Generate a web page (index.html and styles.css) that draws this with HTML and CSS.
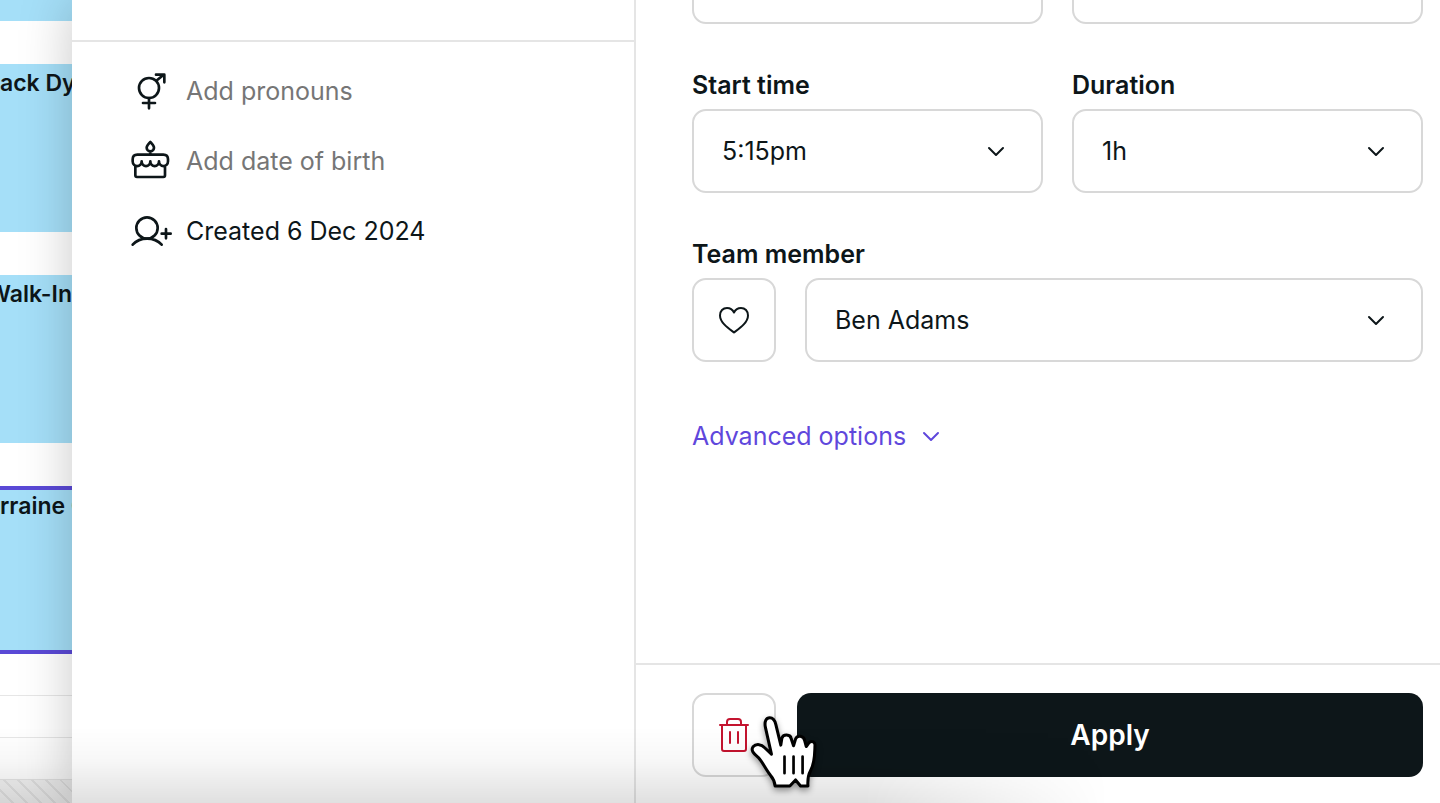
FILE: index.html
```
<!DOCTYPE html>
<html lang="en">
<head>
<meta charset="utf-8">
<title>Edit appointment</title>
<link rel="stylesheet" href="styles.css">
</head>
<body>
<div class="app">
  <aside class="calendar" aria-label="Calendar">
    <div class="event event-first"></div>
    <div class="event">ack Dyn</div>
    <div class="event event-end">Walk-In</div>
    <div class="event event-selected">rraine C</div>
    <div class="slots">
      <div class="slot"></div>
      <div class="slot"></div>
      <div class="slot"></div>
      <div class="slot slot-closed"></div>
    </div>
  </aside>
  <main class="panel">
    <section class="client">
      <div class="client-head"></div>
      <ul class="details">
        <li>
          <svg class="detail-icon" viewBox="36 33 120 120" aria-hidden="true"><circle cx="87" cy="84" r="30"/><path d="M87 114v31M69 129h36M109 62l22-18M108 44h25v23"/></svg>
          <button class="detail-add" type="button">Add pronouns</button>
        </li>
        <li>
          <svg class="detail-icon" viewBox="36 243 120 120" aria-hidden="true"><path d="M91 246c7 7 11 12 11 17s-4 11-11 11-11-6-11-11 4-10 11-17zM91 274v10M52 284h78q14 0 14 14v6c0 19-27 19-27 0 0 19-26 19-26 0 0 19-26 19-26 0 0 19-27 19-27 0v-6q0-14 14-14zM46 318v28q0 5 5 5h79q5 0 5-5v-28"/></svg>
          <button class="detail-add" type="button">Add date of birth</button>
        </li>
        <li>
          <svg class="detail-icon" viewBox="36 453 120 120" aria-hidden="true"><circle cx="81" cy="504" r="32"/><path d="M38 554c11-12 25-18 43-18s33 6 44 18M125 521h27M138 507v28"/></svg>
          <span>Created 6 Dec 2024</span>
        </li>
      </ul>
    </section>
    <form class="editor">
      <div class="fields">
        <div class="row">
          <div class="box"></div>
          <div class="box"></div>
        </div>
        <div class="row">
          <div class="field">
            <label for="start">Start time</label>
            <div class="select">
              <select id="start"><option>5:15pm</option></select>
              <svg class="chevron" viewBox="0 0 18 18" aria-hidden="true"><path d="M2 6l7 7 7-7"/></svg>
            </div>
          </div>
          <div class="field">
            <label for="duration">Duration</label>
            <div class="select">
              <select id="duration"><option>1h</option></select>
              <svg class="chevron" viewBox="0 0 18 18" aria-hidden="true"><path d="M2 6l7 7 7-7"/></svg>
            </div>
          </div>
        </div>
        <div class="field">
          <label for="member">Team member</label>
          <div class="member">
            <button class="square" type="button" aria-label="Preferred team member">
              <svg class="heart" viewBox="0 0 32 28" aria-hidden="true"><path d="M16 26.500C10 22 2 16.500 2 9.500 2 5 5 2 9 2c3 0 5.500 1.500 7 4.500C17.500 3.500 20 2 23 2c4 0 7 3 7 7.500C30 16.500 22 22 16 26.500z"/></svg>
            </button>
            <div class="select">
              <select id="member"><option>Ben Adams</option></select>
              <svg class="chevron" viewBox="0 0 18 18" aria-hidden="true"><path d="M2 6l7 7 7-7"/></svg>
            </div>
          </div>
        </div>
        <button class="advanced" type="button">Advanced options
          <svg class="advanced-chevron" viewBox="0 0 18 18" aria-hidden="true"><path d="M2 6l7 7 7-7"/></svg>
        </button>
      </div>
      <footer class="actions">
        <button class="square" type="button" aria-label="Delete">
          <svg class="trash" viewBox="0 0 32 36" aria-hidden="true"><path d="M2 8h28M9 8V5q0-3 3-3h8q3 0 3 3v3M4 8v24q0 2 2 2h20q2 0 2-2V8M12 15v11M20 15v11"/></svg>
          <svg class="pointer" viewBox="205 225 215 230" aria-hidden="true"><path d="M275 345L257 265C253 246 260 236 270 236S285 243 288 256L303 318 306 298C310 284 332 285 334 299L341 320 347 300C352 286 372 290 374 304L379 322 388 310C396 304 406 308 405 319C404 345 405 370 392 394Q382 412 384 440H362L347 422 330 440H286Q284 422 272 408C258 390 248 368 236 355C220 341 213 333 220 323C230 312 246 316 254 325Z"/><path class="pointer-lines" d="M314 352v50M341 352v50M368 352v50"/></svg>
        </button>
        <button class="apply" type="submit">Apply</button>
      </footer>
    </form>
  </main>
  <div class="shade"></div>
</div>
</body>
</html>
```
FILE: styles.css
```
* { box-sizing: border-box; }

body {
  margin: 0;
  background: #fff;
  color: #0d1619;
  font-family: Inter, "Liberation Sans", sans-serif;
  font-size: 25px;
  line-height: 32px;
}

button, select {
  font: inherit;
  color: inherit;
}

svg {
  overflow: visible;
  fill: none;
  stroke: currentColor;
  stroke-linecap: round;
  stroke-linejoin: round;
}

.app {
  position: relative;
  display: grid;
  grid-template-columns: 72px 1fr;
  min-height: 100vh;
  overflow: hidden;
}

/* Calendar behind the panel */
.calendar {
  display: flex;
  flex-direction: column;
  gap: 43px;
  overflow: hidden;
}

.event {
  display: flex;
  height: 168px;
  padding-top: 3px;
  background: #a5dff8;
  font-size: 23px;
  font-weight: 600;
  white-space: nowrap;
}

.event-first { height: 21px; }
.event-end { justify-content: flex-end; }

.event-selected {
  padding-top: 0;
  border-top: 4px solid #5a49d6;
  border-bottom: 4px solid #5a49d6;
}

.slots {
  display: flex;
  flex: 1;
  flex-direction: column;
  margin-top: -43px;
}

.slot {
  height: 42px;
  border-bottom: 1px solid #e6e6e6;
}

.slot-closed {
  flex: 1;
  border: 0;
  background: repeating-linear-gradient(45deg, #f3f3f3 0 8px, #e4e4e4 8px 10px);
}

/* Panel */
.panel {
  position: relative;
  display: grid;
  grid-template-columns: 564px 1fr;
  background: #fff;
  box-shadow: 0 0 50px rgba(0, 0, 0, 0.22);
}

.client { border-right: 2px solid #e5e5e5; }

.client-head {
  height: 42px;
  border-bottom: 2px solid #e5e5e5;
}

.details {
  display: flex;
  flex-direction: column;
  gap: 30px;
  margin: 0;
  padding: 29px 60px;
  list-style: none;
}

.details li {
  display: flex;
  align-items: center;
  gap: 14px;
}

.detail-icon {
  width: 40px;
  height: 40px;
  stroke-width: 8px;
}

.detail-add {
  padding: 0;
  border: 0;
  background: none;
  color: #767676;
}

.editor {
  display: flex;
  flex-direction: column;
  justify-content: space-between;
}

/* Scrolled so that the first row is partly out of view */
.fields {
  display: flex;
  flex-direction: column;
  gap: 45px;
  margin-top: -60px;
  padding: 0 17px 0 56px;
}

.row {
  display: grid;
  grid-template-columns: 1fr 1fr;
  gap: 29px;
}

.field {
  display: flex;
  flex-direction: column;
  gap: 8px;
}

.field label { font-weight: 600; }

.box, .select select, .square {
  height: 84px;
  border: 2px solid #d8d8d8;
  border-radius: 14px;
  background: #fff;
}

.select {
  display: grid;
  align-items: center;
}

.select select {
  grid-area: 1 / 1;
  width: 100%;
  padding: 0 64px 0 28px;
  appearance: none;
}

.chevron {
  grid-area: 1 / 1;
  justify-self: end;
  width: 18px;
  height: 18px;
  margin-right: 38px;
  stroke-width: 2px;
  pointer-events: none;
}

.member {
  display: grid;
  grid-template-columns: 84px 1fr;
  gap: 29px;
}

.square {
  position: relative;
  display: grid;
  place-items: center;
  width: 84px;
  padding: 0;
}

.heart {
  width: 32px;
  height: 28px;
  stroke-width: 2px;
}

.advanced {
  display: flex;
  align-items: center;
  align-self: flex-start;
  gap: 16px;
  margin-top: 13px;
  padding: 0;
  border: 0;
  background: none;
  color: #5f47dc;
}

.advanced-chevron {
  width: 18px;
  height: 18px;
  stroke-width: 2px;
}

.actions {
  display: grid;
  grid-template-columns: 84px 1fr;
  gap: 21px;
  padding: 28px 17px 26px 56px;
  border-top: 2px solid #e5e5e5;
}

.trash {
  width: 32px;
  height: 36px;
  color: #c4142f;
  stroke-width: 2px;
}

.apply {
  border: 0;
  border-radius: 14px;
  background: #0d1619;
  color: #fff;
  font-size: 28px;
  font-weight: 600;
}

/* Hand pointer over the delete button */
.pointer {
  position: absolute;
  z-index: 3;
  top: 19px;
  left: 54px;
  width: 72px;
  height: 77px;
  fill: #fff;
  stroke: #000;
  stroke-width: 9px;
  filter: drop-shadow(0 3px 3px rgba(0, 0, 0, 0.4));
  pointer-events: none;
}

.pointer-lines { stroke-width: 8px; }

.shade {
  position: absolute;
  right: 0;
  bottom: 0;
  left: 0;
  height: 76px;
  background: linear-gradient(to top, rgba(0, 0, 0, 0.12), rgba(0, 0, 0, 0.03) 55%, transparent);
  mask-image: linear-gradient(to right, #000 60%, transparent 77%);
  pointer-events: none;
}
```
